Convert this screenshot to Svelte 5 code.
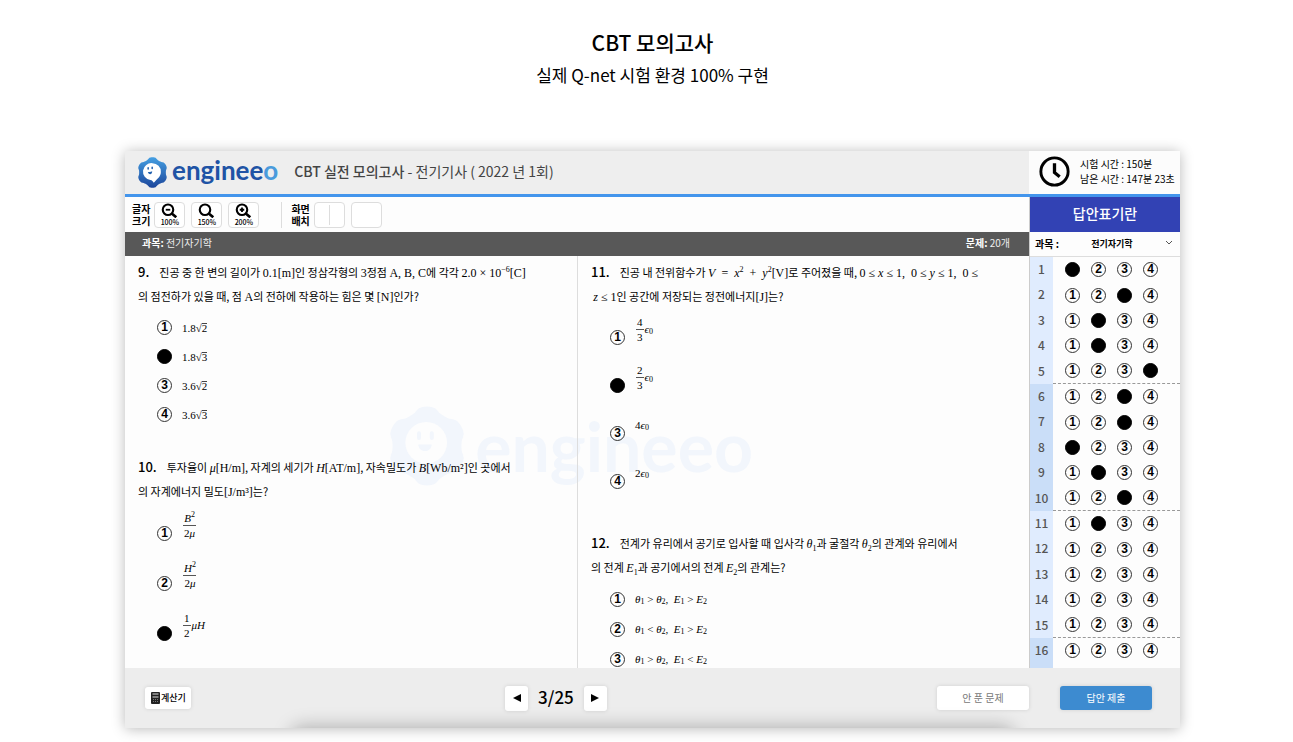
<script>
  const columns = [
    [
      {
        no: 9,
        text:
          "진공 중 한 변의 길이가 <b>0.1[m]</b>인 정삼각형의 <b>3</b>정점 <b>A, B, C</b>에 각각 <b>2.0 × 10<sup>−6</sup>[C]</b><br>의 점전하가 있을 때, 점 <b>A</b>의 전하에 작용하는 힘은 몇 <b>[N]</b>인가?",
        choices: ["1.8√<u>2</u>", "1.8√<u>3</u>", "3.6√<u>2</u>", "3.6√<u>3</u>"],
        answer: 2
      },
      {
        no: 10,
        tall: true,
        text:
          "투자율이 <b><i>μ</i>[H/m]</b>, 자계의 세기가 <b><i>H</i>[AT/m]</b>, 자속밀도가 <b><i>B</i>[Wb/m²]</b>인 곳에서<br>의 자계에너지 밀도<b>[J/m³]</b>는?",
        choices: [
          frac("<i>B</i><sup>2</sup>", "2<i>μ</i>"),
          frac("<i>H</i><sup>2</sup>", "2<i>μ</i>"),
          frac("1", "2") + "<i>μH</i>"
        ],
        answer: 3
      }
    ],
    [
      {
        no: 11,
        tall: true,
        text:
          "진공 내 전위함수가 <b><i>V</i>&ensp;=&ensp;<i>x</i><sup>2</sup>&ensp;+&ensp;<i>y</i><sup>2</sup>[V]</b>로 주어졌을 때, <b>0 ≤ <i>x</i> ≤ 1,&ensp;0 ≤ <i>y</i> ≤ 1,&ensp;0 ≤</b><br>&thinsp;<b><i>z</i> ≤ 1</b>인 공간에 저장되는 정전에너지<b>[J]</b>는?",
        choices: [
          frac("4", "3") + "<i>ϵ</i><sub>0</sub>",
          frac("2", "3") + "<i>ϵ</i><sub>0</sub>",
          "4<i>ϵ</i><sub>0</sub>",
          "2<i>ϵ</i><sub>0</sub>"
        ],
        answer: 2
      },
      {
        no: 12,
        text:
          "전계가 유리에서 공기로 입사할 때 입사각 <b><i>θ</i><sub>1</sub></b>과 굴절각 <b><i>θ</i><sub>2</sub></b>의 관계와 유리에서<br>의 전계 <b><i>E</i><sub>1</sub></b>과 공기에서의 전계 <b><i>E</i><sub>2</sub></b>의 관계는?",
        choices: [relation("&gt;", "&gt;"), relation("&lt;", "&gt;"), relation("&gt;", "&lt;")],
        answer: null
      }
    ]
  ];

  const marked = [1, 3, 2, 2, 4, 3, 3, 1, 2, 3, 2, null, null, null, null, null];
  const groups = [0, 5, 10, 15].map(start => ({
    start,
    rows: marked.slice(start, start + 5)
  }));

  const zooms = [
    { label: "100%", sign: "M6 9h6" },
    { label: "150%", sign: "" },
    { label: "200%", sign: "M6 9h6M9 6v6" }
  ];

  const gear = gearPath();

  function frac(top, bottom) {
    return `<span class="frac"><span>${top}</span><span>${bottom}</span></span>`;
  }

  function relation(a, b) {
    return `<i>θ</i><sub>1</sub> ${a} <i>θ</i><sub>2</sub>,&ensp;<i>E</i><sub>1</sub> ${b} <i>E</i><sub>2</sub>`;
  }

  // six rounded teeth around a circle
  function gearPath() {
    const points = [];
    for (let deg = 0; deg < 360; deg += 4) {
      const a = (deg * Math.PI) / 180;
      const r = 46 + 3.4 * Math.tanh(1.6 * Math.cos(6 * a) + 0.3);
      points.push(`${(50 + r * Math.sin(a)).toFixed(1)} ${(50 - r * Math.cos(a)).toFixed(1)}`);
    }
    return `M${points.join("L")}Z`;
  }
</script>

{#snippet mark(group, n, checked, label)}
  <label class="mark">
    <input type="radio" name={group} value={n} {checked} aria-label={label} />
    <span>{n}</span>
  </label>
{/snippet}

<main>
  <h1>CBT 모의고사</h1>
  <p class="lead">실제 Q-net 시험 환경 100% 구현</p>

  <section class="card">
    <header>
      <div class="brand">
        <svg viewBox="0 0 100 100" aria-hidden="true">
          <defs>
            <linearGradient id="gear-fill" x1="0" y1="0" x2="0" y2="1">
              <stop offset="0" stop-color="#459fe2" />
              <stop offset="1" stop-color="#1c469b" />
            </linearGradient>
          </defs>
          <path d={gear} fill="url(#gear-fill)" />
          <path d="M50 20a27 27 0 0 1 27 28c0 15-12 22-23 35-3-5-5-8-11-9A27 27 0 0 1 50 20Z" fill="#fff" />
          <path d="M36 35v4M49 33v4" stroke="#2563b0" stroke-width="5" stroke-linecap="round" />
          <path d="M35 48q8 2 14-2c0 12-11 12-14 2Z" fill="#2563b0" />
        </svg>
        <span class="wordmark">enginee<em>o</em></span>
      </div>
      <h2><strong>CBT 실전 모의고사</strong> - 전기기사 ( 2022 년 1회)</h2>
      <div class="timer">
        <svg viewBox="0 0 30 30" aria-hidden="true" fill="none" stroke="#000">
          <circle cx="15" cy="15" r="13.2" stroke-width="2.8" />
          <path d="M15 7v9l5 4" stroke-width="3.2" />
        </svg>
        <div>
          <p>시험 시간 : 150분</p>
          <p>남은 시간 : 147분 23초</p>
        </div>
      </div>
    </header>

    <div class="body">
      <div class="exam">
        <div class="toolbar">
          <span class="tool-label">글자<br />크기</span>
          {#each zooms as zoom}
            <button class="tool">
              <svg viewBox="0 0 22 20" aria-hidden="true" fill="none" stroke="#000">
                <circle cx="9" cy="9" r="7" stroke-width="2.8" />
                <path d="M14 14l6 5" stroke-width="3.6" />
                <path d={zoom.sign} stroke-width="2.4" />
              </svg>
              {zoom.label}
            </button>
          {/each}
          <span class="rule"></span>
          <span class="tool-label">화면<br />배치</span>
          <button class="tool split" aria-label="2단 배치"><span></span></button>
          <button class="tool" aria-label="1단 배치"></button>
        </div>

        <div class="subject-bar">
          <span><strong>과목:</strong> 전기자기학</span>
          <span><strong>문제:</strong> 20개</span>
        </div>

        <div class="pane">
          <div class="watermark" aria-hidden="true">
            <svg viewBox="0 0 100 100">
              <path d={gear} fill="#f2f6fc" />
              <circle cx="49" cy="46" r="26" fill="#fdfdfd" />
              <path d="M40 34v6M56 34v6" stroke="#f2f6fc" stroke-width="5" stroke-linecap="round" />
              <path d="M39 48h17c-1 11-16 11-17 0Z" fill="#f2f6fc" />
            </svg>
            <span class="wordmark">engineeo</span>
          </div>

          {#each columns as column}
            <div class="column">
              {#each column as question}
                <article class:tall={question.tall}>
                  <div class="question">
                    <strong>{question.no}.</strong>{@html question.text}
                  </div>
                  <ol>
                    {#each question.choices as choice, i}
                      <li>
                        {@render mark(`q${question.no}`, i + 1, question.answer === i + 1, `${question.no}번 보기 ${i + 1}`)}
                        <span class="math">{@html choice}</span>
                      </li>
                    {/each}
                  </ol>
                </article>
              {/each}
            </div>
          {/each}
        </div>
      </div>

      <aside>
        <h3>답안표기란</h3>
        <div class="subject">
          <label for="subject">과목 :</label>
          <select id="subject">
            <option>전기자기학</option>
          </select>
          <svg viewBox="0 0 8 6" aria-hidden="true" fill="none" stroke="#555">
            <path d="M1 1l3 3 3-3" />
          </svg>
        </div>
        <div class="sheet">
          {#each groups as group}
            <div class="group">
              {#each group.rows as answer, i}
                <div class="row">
                  <span class="no">{group.start + i + 1}</span>
                  <div class="marks">
                    {#each [1, 2, 3, 4] as n}
                      {@render mark(`sheet${group.start + i + 1}`, n, answer === n, `${group.start + i + 1}번 답안 ${n}`)}
                    {/each}
                  </div>
                </div>
              {/each}
            </div>
          {/each}
        </div>
      </aside>
    </div>

    <footer>
      <button class="calc">
        <svg viewBox="0 0 9 12" aria-hidden="true">
          <rect width="9" height="12" rx="1" fill="#222" />
          <path d="M1.5 2h6M1.5 5h6" stroke="#ddd" />
          <path d="M2 7.5h5M2 9.5h5" stroke="#777" stroke-dasharray="1 1" />
        </svg>
        계산기
      </button>
      <nav>
        <button aria-label="이전">
          <svg viewBox="0 0 8 8" aria-hidden="true"><path d="M8 0v8L0 4z" /></svg>
        </button>
        <span>3/25</span>
        <button aria-label="다음">
          <svg viewBox="0 0 8 8" aria-hidden="true"><path d="M0 0v8l8-4z" /></svg>
        </button>
      </nav>
      <div class="actions">
        <button>안 푼 문제</button>
        <button class="submit">답안 제출</button>
      </div>
    </footer>
  </section>
</main>

<style>
  :global(body) {
    margin: 0;
    background: #fff;
    overflow: hidden;
  }

  main {
    padding: 26px 113px 14px 125px;
    font-family: "Noto Sans CJK KR", "Noto Sans", sans-serif;
    color: #000;
  }

  h1,
  h2,
  h3,
  p,
  ol {
    margin: 0;
    padding: 0;
  }

  button,
  select {
    font: inherit;
    color: inherit;
    border: none;
    padding: 0;
    background: white;
    cursor: pointer;
  }

  svg {
    display: block;
  }

  h1 {
    font-size: 21px;
    line-height: 32px;
    font-weight: 500;
    text-align: center;
  }

  .lead {
    font-size: 17px;
    line-height: 34px;
    text-align: center;
    margin-bottom: 59px;
  }

  .card {
    border-radius: 2px;
    box-shadow: 0 1px 14px rgba(0, 0, 0, 0.28);
  }

  header {
    display: flex;
    align-items: center;
    height: 43px;
    background: #eee;
    border-bottom: 3px solid #4395ec;
  }

  .brand {
    display: flex;
    align-items: center;
    gap: 4px;
    padding-left: 12px;
  }

  .brand svg {
    width: 31px;
    height: 31px;
  }

  .wordmark {
    padding-bottom: 5px;
    font-family: Lato, sans-serif;
    font-weight: 700;
    font-size: 26px;
    line-height: 28px;
    color: #2053a5;
  }

  .wordmark em {
    font-style: normal;
    color: #4a9bdc;
  }

  h2 {
    flex: 1;
    padding: 0 0 3px 16px;
    font-size: 14px;
    font-weight: 400;
    color: #444;
  }

  h2 strong {
    font-weight: 500;
  }

  .timer {
    display: flex;
    align-items: center;
    gap: 10px;
    box-sizing: border-box;
    width: 151px;
    height: 43px;
    padding: 0 0 3px 10px;
    background: #fcfcfc;
    font-size: 10px;
    line-height: 15px;
    white-space: nowrap;
  }

  .timer svg {
    width: 31px;
    height: 31px;
  }

  .body {
    display: grid;
    grid-template-columns: 1fr 151px;
    background: #fdfdfd;
  }

  .toolbar {
    display: flex;
    align-items: center;
    gap: 6px;
    height: 35px;
    padding-left: 7px;
  }

  .tool-label {
    margin-right: -2px;
    font-size: 10px;
    line-height: 12px;
    font-weight: 600;
  }

  .tool {
    display: flex;
    flex-direction: column;
    align-items: center;
    justify-content: center;
    box-sizing: border-box;
    width: 31px;
    height: 26px;
    border: 1px solid #ddd;
    border-radius: 4px;
    font-size: 7px;
    line-height: 8px;
    font-weight: 500;
  }

  .tool svg {
    width: 17px;
    height: 15px;
  }

  .split span {
    width: 1px;
    height: 20px;
    background: #ddd;
  }

  .rule {
    width: 1px;
    height: 26px;
    margin: 0 3px 0 16px;
    background: #ddd;
  }

  .subject-bar {
    display: flex;
    justify-content: space-between;
    height: 24px;
    padding: 0 19px 0 17px;
    background: #585858;
    color: #eee;
    font-size: 10px;
    line-height: 22px;
  }

  .subject-bar strong {
    font-weight: 700;
    color: #fff;
  }

  .pane {
    position: relative;
    display: grid;
    grid-template-columns: 1fr 1fr;
    height: 412px;
    overflow: hidden;
  }

  .watermark {
    position: absolute;
    top: 150px;
    left: 29%;
    display: flex;
    align-items: center;
    gap: 8px;
  }

  .watermark svg {
    width: 80px;
    height: 80px;
  }

  .watermark .wordmark {
    padding: 0;
    font-size: 68px;
    line-height: 76px;
    color: #f2f6fc;
  }

  .column {
    --choice: 29px;
    --tall-choice: 50px;
    position: relative;
    padding: 4px 13px;
  }

  .column + .column {
    --choice: 30px;
    --tall-choice: 48px;
    border-left: 1px solid #ddd;
  }

  article {
    margin-bottom: 26px;
  }

  .question {
    font-size: 11px;
    line-height: 24px;
    white-space: nowrap;
  }

  .question strong {
    margin-right: 10px;
    font-size: 13px;
    line-height: 0;
    font-weight: 500;
  }

  .question :global(b),
  .math {
    font-family: "Liberation Serif", serif;
    font-weight: 400;
  }

  .question :global(b) {
    font-size: 12px;
    line-height: 0;
  }

  .question :global(sup),
  .question :global(sub),
  .math :global(sup) {
    font-size: 8px;
    line-height: 0;
  }

  ol {
    margin-top: 5px;
    padding-left: 19px;
    list-style: none;
  }

  li {
    display: flex;
    align-items: center;
    gap: 10px;
    height: var(--choice);
  }

  .tall li {
    height: var(--tall-choice);
  }

  .math {
    display: flex;
    align-items: center;
    font-size: 11px;
    line-height: 14px;
    white-space: pre;
  }

  .math :global(sub) {
    padding-top: 5px;
    font-size: 8px;
    line-height: 9px;
  }

  .tall .math {
    padding-bottom: 16px;
  }

  .math :global(u) {
    text-decoration: none;
    background: linear-gradient(#444, #444) 0 2px / 100% 1px no-repeat;
  }

  .math :global(.frac) {
    display: inline-flex;
    flex-direction: column;
    align-items: center;
    margin: 0 1px;
  }

  .math :global(.frac > span) {
    padding: 0 1px;
  }

  .math :global(.frac > span:last-child) {
    border-top: 1px solid #555;
  }

  .mark {
    position: relative;
    display: block;
    box-sizing: border-box;
    flex: none;
    width: 15px;
    height: 15px;
    border: 1px solid #333;
    border-radius: 50%;
    font: 700 12px/13px "Liberation Sans", sans-serif;
    text-align: center;
    cursor: pointer;
  }

  .mark span {
    display: block;
  }

  .mark input {
    position: absolute;
    inset: 0;
    margin: 0;
    opacity: 0;
  }

  .mark:has(input:checked) {
    background: #000;
    border-color: #000;
  }

  aside {
    border-left: 1px solid #ccc;
  }

  h3 {
    height: 35px;
    background: #3242b4;
    color: #fff;
    font-size: 14px;
    line-height: 33px;
    font-weight: 500;
    text-align: center;
  }

  .subject {
    position: relative;
    display: flex;
    align-items: center;
    box-sizing: border-box;
    height: 25px;
    padding: 0 5px 2px;
    border-bottom: 1px solid #ddd;
    font-size: 10px;
    font-weight: 600;
  }

  .subject select {
    flex: 1;
    appearance: none;
    padding-right: 10px;
    background: none;
    font-size: 9px;
    text-align: center;
    text-align-last: center;
  }

  .subject svg {
    position: absolute;
    right: 7px;
    width: 8px;
    height: 6px;
    pointer-events: none;
  }

  .sheet {
    height: 411px;
    overflow: hidden;
  }

  .group {
    display: grid;
    grid-template-rows: repeat(5, 1fr);
    height: 127px;
    background: linear-gradient(to right, #e0ecfe 23px, transparent 23px);
  }

  .group:nth-child(even) {
    background: linear-gradient(to right, #cadef8 23px, transparent 23px);
  }

  .group .row:nth-child(5) .marks {
    border-bottom: 1px dashed #999;
  }

  .row {
    display: flex;
  }

  .no {
    width: 23px;
    font-size: 12px;
    line-height: 23px;
    font-weight: 500;
    text-align: center;
    color: #555;
  }

  .marks {
    flex: 1;
    display: flex;
    align-items: center;
    gap: 11px;
    padding-left: 12px;
  }

  footer {
    position: relative;
    display: flex;
    align-items: center;
    justify-content: space-between;
    height: 60px;
    padding: 0 28px 0 20px;
    background: #ededed;
    overflow: hidden;
  }

  footer::after {
    content: "";
    position: absolute;
    bottom: -20px;
    left: 16%;
    right: 16%;
    height: 18px;
    border-radius: 9px;
    box-shadow: 0 0 18px 4px rgba(0, 0, 0, 0.25);
  }

  footer button {
    border-radius: 3px;
    box-shadow: 0 0 4px rgba(0, 0, 0, 0.12);
  }

  .calc {
    display: flex;
    align-items: center;
    gap: 1px;
    height: 22px;
    padding: 0 5px 0 6px;
    font-size: 9px;
    line-height: 20px;
    font-weight: 500;
  }

  .calc svg {
    width: 9px;
    height: 12px;
  }

  nav {
    display: flex;
    align-items: center;
    gap: 10px;
    margin-right: 16px;
    font-size: 17px;
    font-weight: 500;
  }

  nav span {
    padding-bottom: 3px;
    line-height: 24px;
  }

  nav button {
    display: grid;
    place-items: center;
    width: 23px;
    height: 25px;
  }

  nav svg {
    width: 8px;
    height: 8px;
  }

  .actions {
    display: flex;
    gap: 31px;
  }

  .actions button {
    width: 92px;
    height: 24px;
    padding-bottom: 2px;
    font-size: 10px;
    color: #777;
  }

  .actions .submit {
    background: #3d8bd0;
    color: #fff;
  }
</style>
